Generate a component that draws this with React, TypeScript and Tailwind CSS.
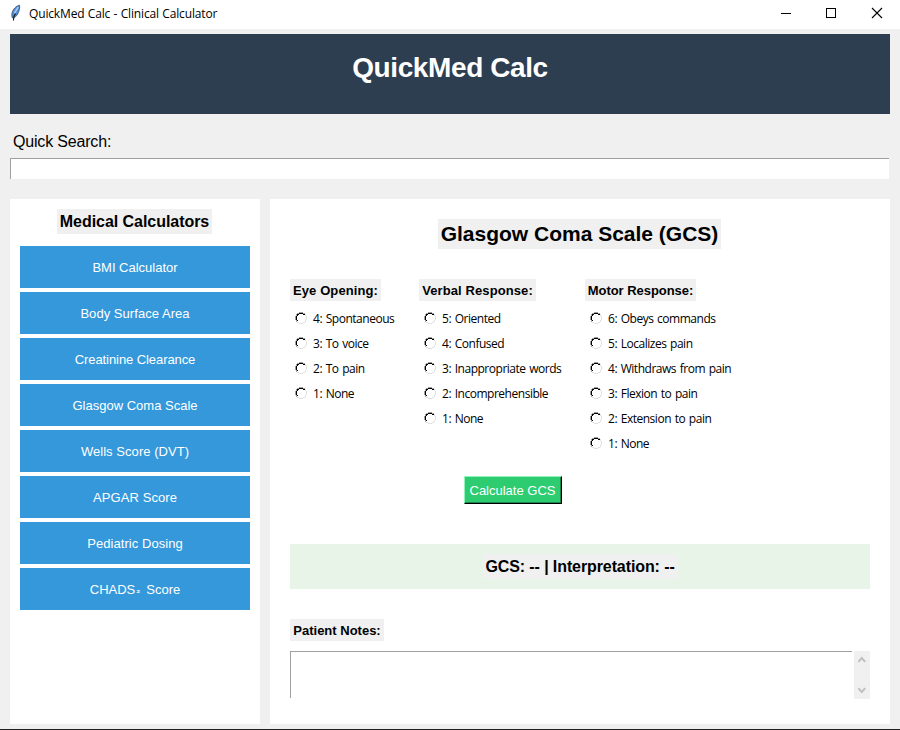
const calculators = [
  { name: 'BMI Calculator', tracking: 'tracking-normal' },
  { name: 'Body Surface Area', tracking: 'tracking-[0.05px]' },
  { name: 'Creatinine Clearance', tracking: 'tracking-[-0.08px]' },
  { name: 'Glasgow Coma Scale', tracking: 'tracking-normal' },
  { name: 'Wells Score (DVT)', tracking: 'tracking-[0.05px]' },
  { name: 'APGAR Score', tracking: 'tracking-[0.1px]' },
  { name: 'Pediatric Dosing', tracking: 'tracking-[0.05px]' },
];

const groups = [
  {
    title: 'Eye Opening:',
    column: 'w-[129px]',
    label: 'w-[91px]',
    tracking: 'tracking-[0.1px]',
    options: ['4: Spontaneous', '3: To voice', '2: To pain', '1: None'],
  },
  {
    title: 'Verbal Response:',
    column: 'w-[166px]',
    label: 'w-[117px]',
    tracking: 'tracking-[0.1px]',
    options: ['5: Oriented', '4: Confused', '3: Inappropriate words', '2: Incomprehensible', '1: None'],
  },
  {
    title: 'Motor Response:',
    column: 'w-[180px]',
    label: 'w-[111px]',
    tracking: 'tracking-[-0.05px]',
    options: [
      '6: Obeys commands',
      '5: Localizes pain',
      '4: Withdraws from pain',
      '3: Flexion to pain',
      '2: Extension to pain',
      '1: None',
    ],
  },
];

function Feather() {
  return (
    <svg width="12" height="18" viewBox="0 0 12 18" className="shrink-0">
      <path d="M10.500 1.200C7.400 1.600 3.500 5.500 2.900 9.500c-.3 2 0 3.400.5 4.500 1.900-.2 4.300-1.600 5.500-4.300C10.200 6.700 11.200 3.300 10.500 1.200Z" fill="#4f8edb" stroke="#3a4048" strokeWidth=".700" />
      <path d="M9.200 3.200 5.400 9.300" stroke="#a9cdf3" strokeWidth="1.500" />
      <path d="M6.500 9.500 5 12.500l-.6 4" stroke="#111" strokeWidth="1.100" fill="none" />
    </svg>
  );
}

function Radio() {
  return (
    <svg width="12" height="12" viewBox="0 0 12 12" fill="none" shapeRendering="crispEdges" className="mb-[2px] shrink-0">
      <path d="M4 .500h4M2 1.500h2M8 1.500h2M.500 4v4M1.500 2v2M1.500 8v2" stroke="#a0a0a0" />
      <path d="M4 1.500h4M2 2.500h2M8 2.500h2M1.500 4v4M2.500 3v1M2.500 8v1" stroke="#000" />
      <path d="M10.500 2v2M11.500 4v4M10.500 8v2M8 10.500h2M4 11.500h4M2 10.500h2" stroke="#e0e0e0" />
    </svg>
  );
}

export default function App() {
  return (
    <div className="flex h-[730px] w-[900px] flex-col overflow-hidden border-b border-[#202020] bg-[#f0f0f0] font-['Liberation_Sans',Arial,sans-serif] text-black">
      <header className="flex h-[29px] shrink-0 items-start bg-white">
        <div className="flex pt-[4px] pl-[9px]">
          <Feather />
        </div>
        <span className="ml-[8px] pt-[6px] font-['Open_Sans',sans-serif] text-[12px] leading-[16px] tracking-[-0.15px] [word-spacing:0.4px] whitespace-nowrap">
          QuickMed Calc - Clinical Calculator
        </span>
        <svg width="140" height="29" viewBox="0 0 140 29" className="ml-auto shrink-0" fill="none" stroke="#000" shapeRendering="crispEdges">
          <path d="M21 13.500h10" />
          <path d="M66.500 8.500h9v9h-9z" />
          <path d="m112 8 10 10m0-10-10 10" shapeRendering="auto" strokeWidth="1.100" />
        </svg>
      </header>

      <div className="mx-[10px] mt-[5px] flex h-[80px] shrink-0 justify-center bg-[#2c3e50] pt-[18px]">
        <h1 className="text-[28px] leading-[32px] font-bold tracking-[-0.4px] whitespace-nowrap text-white">QuickMed Calc</h1>
      </div>

      <div className="mx-[10px] mt-[18px] flex shrink-0 flex-col">
        <label className="ml-[3px] h-[26px] text-[16px] leading-[20px] tracking-[-0.18px]">
          <span>Quick Search:</span>
        </label>
        <div className="mr-px h-[21px] border-t border-l border-[#a0a0a0] bg-white" />
      </div>

      <main className="mx-[10px] mt-[20px] flex h-[525px] shrink-0 gap-[10px]">
        <aside className="flex w-[250px] flex-col bg-white px-[10px] pt-[10px]">
          <h2 className="mb-[12px] ml-[37px] flex h-[25px] w-[155px] items-center justify-center bg-[#f0f0f0] text-[16px] leading-[25px] font-bold tracking-[-0.05px] whitespace-nowrap">
            <span>Medical Calculators</span>
          </h2>
          <div className="flex w-full flex-col gap-[4px] text-[13px] text-white">
            {calculators.map((c) => (
              <button key={c.name} className="flex h-[42px] items-center justify-center bg-[#3498db] pt-[2px]">
                <span className={c.tracking}>{c.name}</span>
              </button>
            ))}
            <button className="flex h-[42px] items-center justify-center bg-[#3498db] pt-[2px]">
              <span>CHADS</span>
              <span className="w-[11px] pl-[1px] text-left text-[9px] leading-[12px] font-bold">₂</span>
              <span>Score</span>
            </button>
          </div>
        </aside>

        <section className="flex w-[620px] flex-col bg-white px-[20px] pt-[20px]">
          <h2 className="ml-[148px] flex h-[30px] w-[283px] shrink-0 items-center justify-center bg-[#f0f0f0] text-[21px] font-bold whitespace-nowrap">
            <span>Glasgow Coma Scale (GCS)</span>
          </h2>

          <div className="mt-[30px] flex h-[197px]">
            {groups.map((g) => (
              <div key={g.title} className={`${g.column} shrink-0`}>
                <h3 className={`${g.label} mb-[5px] flex h-[22px] items-center justify-center bg-[#f0f0f0] pt-[2px] text-[13px] font-bold whitespace-nowrap`}>
                  <span className={g.tracking}>{g.title}</span>
                </h3>
                {g.options.map((o) => (
                  <div key={o} className="flex h-[25px] items-center pl-[5px]">
                    <Radio />
                    <span className="ml-[6px] font-['Open_Sans',sans-serif] text-[12px] leading-[16px] tracking-[-0.48px] [word-spacing:1px] whitespace-nowrap">{o}</span>
                  </div>
                ))}
              </div>
            ))}
          </div>

          <button className="ml-[174px] flex h-[28px] w-[98px] shrink-0 border-t border-r border-b border-l border-t-[#90f5b8] border-r-black border-b-black border-l-[#90f5b8]">
            <span className="flex h-full w-full items-center justify-center border-r border-b border-[#1e8449] bg-[#2ecc71] pt-[2px] text-[13px] whitespace-nowrap text-white">
              <span>Calculate GCS</span>
            </span>
          </button>

          <div className="mt-[40px] flex h-[45px] shrink-0 items-start justify-center bg-[#e8f4e8] pt-[10px]">
            <div className="flex h-[25px] w-[195px] items-center justify-center bg-[#f0f0f0] text-[16px] font-bold tracking-[-0.1px] whitespace-nowrap">
              <span>GCS: -- | Interpretation: --</span>
            </div>
          </div>

          <h3 className="mt-[30px] flex h-[22px] w-[94px] shrink-0 items-center justify-center bg-[#f0f0f0] pt-[2px] text-[13px] font-bold whitespace-nowrap">
            <span>Patient Notes:</span>
          </h3>
          <div className="mt-[10px] flex h-[48px] shrink-0 gap-[2px]">
            <div className="h-[47px] w-[562px] border-t border-l border-[#a0a0a0]" />
            <div className="flex h-[48px] w-[16px] flex-col items-center justify-between bg-[#f0f0f0] py-[5px]">
              <svg width="8" height="7" viewBox="0 0 8 7" fill="none">
                <path d="m.200 5.900 3.500-3.900 3.500 3.900" stroke="#bfbfbf" strokeWidth="2" />
              </svg>
              <svg width="8" height="7" viewBox="0 0 8 7" fill="none">
                <path d="m.200 1.100 3.500 3.900 3.500-3.900" stroke="#bfbfbf" strokeWidth="2" />
              </svg>
            </div>
          </div>
        </section>
      </main>
    </div>
  );
}
